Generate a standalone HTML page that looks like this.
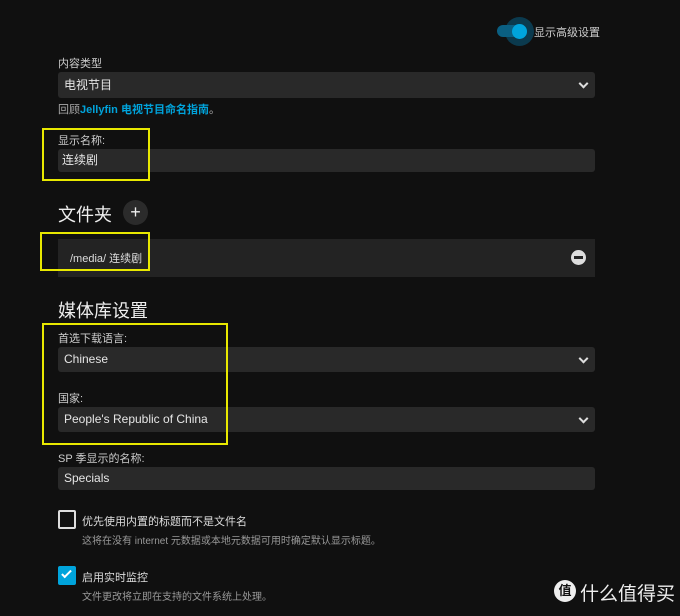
<!DOCTYPE html>
<html><head><meta charset="utf-8"><style>
*{margin:0;padding:0;box-sizing:border-box}
body{width:680px;height:616px;background:#101010;font-family:"Liberation Sans","Noto Sans CJK SC",sans-serif;color:#ddd;position:relative;overflow:hidden}
.a{position:absolute;white-space:nowrap}
.lbl{font-size:11px;color:#ccc}
.inp{position:absolute;left:58px;width:537px;background:#292929;border-radius:3px;font-size:12px;color:#e6e6e6;padding-left:6px}
.chev{position:absolute;right:8px;top:50%;width:7px;height:7px;border-right:2px solid #ddd;border-bottom:2px solid #ddd;transform:translateY(-70%) rotate(45deg)}
.yb{position:absolute;border:2px solid #e8e800}
h2{position:absolute;font-weight:normal;font-size:18px;color:#eee;left:58px}
</style></head><body>
<div class="a" style="left:505px;top:17px;width:29px;height:29px;border-radius:50%;background:#0b3a4e"></div>
<div class="a" style="left:497px;top:25px;width:30px;height:12px;border-radius:6px;background:#0a5f82"></div>
<div class="a" style="left:512px;top:24px;width:15px;height:15px;border-radius:50%;background:#00a4dc"></div>
<div class="a lbl" style="left:534px;top:24px;font-size:11px">显示高级设置</div>

<div class="a lbl" style="left:58px;top:55px">内容类型</div>
<div class="inp" style="top:72px;height:26px;line-height:26px">电视节目<span class="chev"></span></div>
<div class="a" style="left:58px;top:101px;font-size:11px;color:#aaa">回顾<b style="color:#00a4dc">Jellyfin 电视节目命名指南</b>。</div>

<div class="a lbl" style="left:58px;top:132px">显示名称:</div>
<div class="inp" style="top:149px;height:23px;line-height:23px;padding-left:4px">连续剧</div>
<div class="yb" style="left:42px;top:128px;width:108px;height:53px"></div>

<h2 style="top:201px">文件夹</h2>
<div class="a" style="left:123px;top:200px;width:25px;height:25px;border-radius:50%;background:#2b2b2b;color:#eee;font-size:18px;line-height:24px;text-align:center">+</div>
<div class="a" style="left:58px;top:239px;width:537px;height:38px;background:#232323"></div>
<div class="a" style="left:70px;top:250px;font-size:11px;color:#ddd">/media/ 连续剧</div>
<div class="a" style="left:571px;top:250px;width:15px;height:15px;border-radius:50%;background:#ddd"><div style="position:absolute;left:3px;top:6px;width:9px;height:3px;background:#232323"></div></div>
<div class="yb" style="left:40px;top:232px;width:110px;height:39px"></div>

<h2 style="top:297px">媒体库设置</h2>
<div class="a lbl" style="left:58px;top:330px">首选下载语言:</div>
<div class="inp" style="top:347px;height:25px;line-height:25px">Chinese<span class="chev"></span></div>
<div class="a lbl" style="left:58px;top:390px">国家:</div>
<div class="inp" style="top:407px;height:25px;line-height:25px">People's Republic of China<span class="chev"></span></div>
<div class="yb" style="left:42px;top:323px;width:186px;height:122px"></div>

<div class="a lbl" style="left:58px;top:450px">SP 季显示的名称:</div>
<div class="inp" style="top:467px;height:23px;line-height:23px">Specials</div>

<div class="a" style="left:58px;top:510px;width:18px;height:19px;border:2px solid #ddd;border-radius:2px"></div>
<div class="a lbl" style="left:82px;top:513px;color:#ddd">优先使用内置的标题而不是文件名</div>
<div class="a" style="left:82px;top:532px;font-size:10px;color:#999">这将在没有 internet 元数据或本地元数据可用时确定默认显示标题。</div>

<div class="a" style="left:58px;top:566px;width:18px;height:19px;background:#00a4dc;border-radius:2px"><div style="position:absolute;left:6px;top:2px;width:5px;height:10px;border-right:2px solid #fff;border-bottom:2px solid #fff;transform:rotate(45deg)"></div></div>
<div class="a lbl" style="left:82px;top:569px;color:#ddd">启用实时监控</div>
<div class="a" style="left:82px;top:588px;font-size:10px;color:#999">文件更改将立即在支持的文件系统上处理。</div>

<div class="a" style="left:554px;top:580px;width:22px;height:22px;border-radius:50%;background:#eee;color:#111;font-size:13px;line-height:22px;text-align:center;font-weight:bold">值</div>
<div class="a" style="left:580px;top:579px;font-size:19px;color:#eee">什么值得买</div>
</body></html>
